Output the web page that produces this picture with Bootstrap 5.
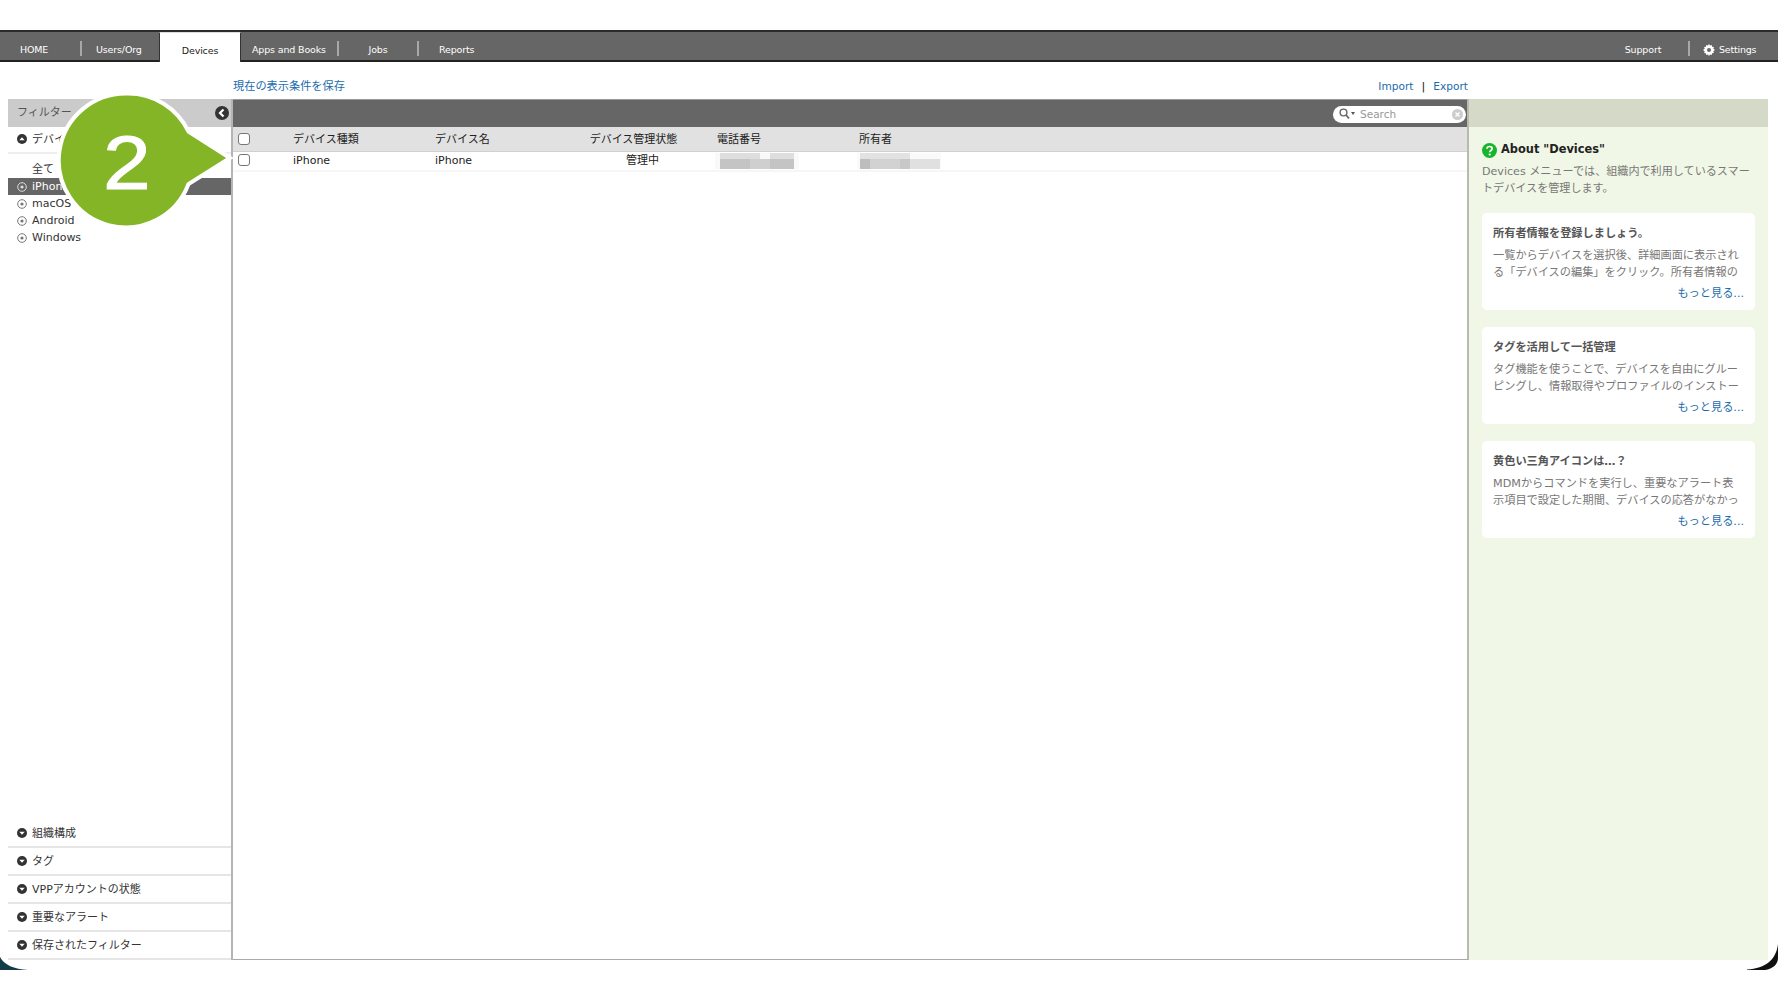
<!DOCTYPE html>
<html lang="ja">
<head>
<meta charset="utf-8">
<title>Devices</title>
<link href="https://cdn.jsdelivr.net/npm/bootstrap@5.3.0/dist/css/bootstrap.min.css" rel="stylesheet">
<style>
html,body{height:1000px;overflow:hidden;background:#fff}
body{font-family:"DejaVu Sans","Noto Sans CJK JP",sans-serif;font-size:11px;color:#333;position:relative}
a{text-decoration:none;color:#1c6bab}
.topnav{margin-top:30px;height:32px;background:#666;border-top:2px solid #2b2b2b;border-bottom:2px solid #222;color:#fff;font-size:9.5px;letter-spacing:-.15px;font-weight:500}
.tabx{height:28px;flex:none;padding-top:8px}
.tabsep{width:2px;height:15px;background:#a8a8a8;flex:none;margin-top:5px}
.tw-home{width:80px;padding-left:20px}
.tw-users{width:77px;padding-left:14px}
.tw-dev{width:82px;background:#fff;color:#222;height:30px;margin-bottom:-2px;border:1px solid #333;border-bottom:0;border-top-color:#ddd;justify-content:center;padding-top:7px}
.tw-apps{width:96px;padding-left:11px}
.tw-jobs{width:78px;justify-content:center}
.tw-rep{width:90px;padding-left:20px}
.tw-sup{width:94px;padding-left:4px}
.tw-set{width:88px;padding-left:13px;padding-right:2px}
.tw-set span{letter-spacing:-.2px}
.subrow{height:37px;padding:13px 310px 0 233px;color:#1c6bab;font-size:11.2px}
.subrow .latinlink{font-size:10.6px}
.pipe{color:#111;margin:0 8px 0 8px}
.panes{height:861px;padding:0 10px 0 8px}
.sidepane{width:225px;flex:none;border-right:2px solid #b4b4b4;position:relative}
.sidehead{height:28px;background:#cbcbcb;color:#555;padding-left:9px;flex:none}
.sidehead svg{margin-right:2px}
.sect{height:28px;padding:2px 0 0 9px;border-bottom:2px solid #e6e6e6;flex:none;color:#333}
.sect svg{margin:0 5px 2px 0;flex:none}
.firstsect{height:27px;border-bottom-color:#eee}
.firstsect svg{margin-bottom:4px}
.typelist{padding-top:7px;flex:1}
.typerow{height:17px;padding:2px 0 0 9px}
.typerow.picked{background:#666;color:#fff}
.typerow svg{margin:0 5px 2px 0;flex:none}
.typerow .noicon{width:10px;margin-right:5px}
.mainpane{width:1236px;flex:none;border-bottom:1px solid #a9a9a9;border-right:2px solid #b9b9ad}
.mainhead{height:28px;background:#666;padding:1px 1px 0 0;border-top:1px solid #999;flex:none}
.searchpill{width:133px;height:17px;background:#fff;border-radius:9px;color:#999;padding:0 3px 0 6px;font-size:10.5px;gap:1px}
.searchpill .searchword{margin-left:3px;padding-top:1px}
.devtable{table-layout:fixed;width:100%;margin:0;border-collapse:collapse}
.devtable th{background:#e1e1e1;height:24px;font-weight:400;border-bottom:1px solid #d0d0d0;padding:2px 0 0;color:#222;vertical-align:middle}
.devtable td{height:20px;padding:1px 0 0;border-bottom:2px solid #f6f6f6;color:#222;vertical-align:middle}
.devtable th.statehead{padding-right:26px}
.devtable td.statecell{padding-right:8px}
.boxc{width:12px;height:12px;border:1px solid #777;border-radius:3px;background:#fff;margin:0 0 2px 5px;display:block;appearance:none}
.c1{width:60px}.c2{width:142px}.c3{width:141px}.c4{width:141px}.c5{width:142px}
.blurcell{display:block;height:16px;width:84px;margin:0 0 0 -2px}
.helppane{flex:1;background:#f1f7e6}
.helphead{height:28px;background:#d5d9c8;flex:none}
.helpbody{padding:14px 13px 0 13px;color:#777}
.helptitle{font-size:11.4px;font-weight:700;color:#222;height:18px;gap:4px}
.helpdesc{line-height:17px;margin:4px 0 16px;font-size:11.1px;white-space:nowrap}
.tipcard{height:97px;background:#fff;border-radius:5px;padding:11px 11px 0;margin-bottom:17px;white-space:nowrap;font-size:11.2px}
.tiptitle{font-weight:700;color:#555;line-height:20px;margin-bottom:3px}
.tiptext{line-height:17px;color:#777}
.tipmore{text-align:right;line-height:17px;margin-top:4px;margin-right:0}
.overbubble{position:absolute;left:55px;top:90px}
.overcorner{position:absolute;left:0;top:940px}
</style>
</head>
<body>
<nav class="topnav d-flex align-items-center">
  <div class="tabx tw-home d-flex align-items-center">HOME</div><div class="tabsep"></div>
  <div class="tabx tw-users d-flex align-items-center">Users/Org</div>
  <div class="tabx tw-dev d-flex align-items-center">Devices</div>
  <div class="tabx tw-apps d-flex align-items-center">Apps and Books</div><div class="tabsep"></div>
  <div class="tabx tw-jobs d-flex align-items-center">Jobs</div><div class="tabsep"></div>
  <div class="tabx tw-rep d-flex align-items-center">Reports</div>
  <div class="flex-grow-1"></div>
  <div class="tabx tw-sup d-flex align-items-center justify-content-center">Support</div><div class="tabsep"></div>
  <div class="tabx tw-set d-flex align-items-center gap-1">
    <svg width="12" height="12" viewBox="0 0 12 12"><path fill="#fff" d="M6 0l1 1.500 1.700-.6.4 1.800 1.800.4-.6 1.700L12 6l-1.700 1.200.6 1.700-1.800.4-.4 1.800-1.700-.6L6 12l-1-1.500-1.700.6-.4-1.800-1.800-.4.6-1.700L0 6l1.700-1.200-.6-1.700 1.800-.4.400-1.800 1.700.6z"/><circle cx="6" cy="6" r="2" fill="#666"/></svg>
    <span>Settings</span>
  </div>
</nav>
<div class="subrow d-flex align-items-center justify-content-between">
  <a href="#">現在の表示条件を保存</a>
  <span><a class="latinlink" href="#">Import</a><span class="pipe">|</span><a class="latinlink" href="#">Export</a></span>
</div>
<div class="panes d-flex">
  <aside class="sidepane d-flex flex-column">
    <div class="sidehead d-flex align-items-center justify-content-between">
      <span>フィルター</span>
      <svg width="14" height="14" viewBox="0 0 14 14"><circle cx="7" cy="7" r="7" fill="#333"/><path d="M8.500 3.500L5 7l3.500 3.500" stroke="#fff" stroke-width="2.200" fill="none"/></svg>
    </div>
    <div class="sect firstsect d-flex align-items-center">
      <svg width="10" height="10" viewBox="0 0 10 10"><circle cx="5" cy="5" r="5" fill="#333"/><path d="M2.300 6.200L5 3.200l2.700 3z" fill="#fff"/></svg>
      <span>デバイスの種類</span>
    </div>
    <div class="typelist">
      <div class="typerow d-flex align-items-center"><span class="noicon"></span>全て</div>
      <div class="typerow picked d-flex align-items-center"><svg width="10" height="10" viewBox="0 0 10 10"><circle cx="5" cy="5" r="4.300" fill="none" stroke="#ddd"/><circle cx="5" cy="5" r="1.600" fill="#ddd"/></svg>iPhone</div>
      <div class="typerow d-flex align-items-center"><svg width="10" height="10" viewBox="0 0 10 10"><circle cx="5" cy="5" r="4.300" fill="none" stroke="#777"/><circle cx="5" cy="5" r="1.600" fill="#777"/></svg>macOS</div>
      <div class="typerow d-flex align-items-center"><svg width="10" height="10" viewBox="0 0 10 10"><circle cx="5" cy="5" r="4.300" fill="none" stroke="#777"/><circle cx="5" cy="5" r="1.600" fill="#777"/></svg>Android</div>
      <div class="typerow d-flex align-items-center"><svg width="10" height="10" viewBox="0 0 10 10"><circle cx="5" cy="5" r="4.300" fill="none" stroke="#777"/><circle cx="5" cy="5" r="1.600" fill="#777"/></svg>Windows</div>
    </div>
    <div class="sect d-flex align-items-center"><svg width="10" height="10" viewBox="0 0 10 10"><circle cx="5" cy="5" r="5" fill="#333"/><path d="M2.300 3.800L5 6.800l2.700-3z" fill="#fff"/></svg><span>組織構成</span></div>
    <div class="sect d-flex align-items-center"><svg width="10" height="10" viewBox="0 0 10 10"><circle cx="5" cy="5" r="5" fill="#333"/><path d="M2.300 3.800L5 6.800l2.700-3z" fill="#fff"/></svg><span>タグ</span></div>
    <div class="sect d-flex align-items-center"><svg width="10" height="10" viewBox="0 0 10 10"><circle cx="5" cy="5" r="5" fill="#333"/><path d="M2.300 3.800L5 6.800l2.700-3z" fill="#fff"/></svg><span>VPPアカウントの状態</span></div>
    <div class="sect d-flex align-items-center"><svg width="10" height="10" viewBox="0 0 10 10"><circle cx="5" cy="5" r="5" fill="#333"/><path d="M2.300 3.800L5 6.800l2.700-3z" fill="#fff"/></svg><span>重要なアラート</span></div>
    <div class="sect d-flex align-items-center"><svg width="10" height="10" viewBox="0 0 10 10"><circle cx="5" cy="5" r="5" fill="#333"/><path d="M2.300 3.800L5 6.800l2.700-3z" fill="#fff"/></svg><span>保存されたフィルター</span></div>
  </aside>
  <main class="mainpane d-flex flex-column">
    <div class="mainhead d-flex align-items-center justify-content-end">
      <div class="searchpill d-flex align-items-center">
        <svg width="17" height="12" viewBox="0 0 17 12"><circle cx="4.500" cy="4.500" r="3.400" fill="none" stroke="#666" stroke-width="1.400"/><path d="M7 7l3 3.500" stroke="#666" stroke-width="1.800"/><path d="M12 4h4l-2 3z" fill="#555"/></svg>
        <span class="flex-grow-1 searchword">Search</span>
        <svg width="11" height="11" viewBox="0 0 11 11"><circle cx="5.500" cy="5.500" r="5.500" fill="#ccc"/><path d="M3.500 3.500l4 4m0-4l-4 4" stroke="#fff" stroke-width="1.300"/></svg>
      </div>
    </div>
    <table class="devtable">
      <thead>
        <tr><th class="c1"><input class="boxc" type="checkbox" aria-label="全て選択"></th><th class="c2">デバイス種類</th><th class="c3">デバイス名</th><th class="c4 statehead text-center">デバイス管理状態</th><th class="c5">電話番号</th><th>所有者</th></tr>
      </thead>
      <tbody>
        <tr><td><input class="boxc" type="checkbox" aria-label="選択"></td><td>iPhone</td><td>iPhone</td><td class="statecell text-center">管理中</td>
          <td><svg class="blurcell" viewBox="0 0 84 16"><rect width="84" height="16" fill="#f9f9f9"/><g fill="#dedede"><rect x="5" y="0" width="40" height="6"/><rect x="55" y="0" width="24" height="6"/></g><g fill="#c4c4c4"><rect x="5" y="6" width="30" height="10"/><rect x="55" y="6" width="24" height="10"/><rect x="35" y="6" width="20" height="10" fill="#cfcfcf"/></g></svg></td>
          <td><svg class="blurcell" viewBox="0 0 84 16"><rect width="84" height="16" fill="#fafafa"/><g fill="#e2e2e2"><rect x="3" y="0" width="50" height="6"/></g><g fill="#d2d2d2"><rect x="13" y="6" width="30" height="10"/></g><rect x="3" y="6" width="10" height="10" fill="#bdbdbd"/><rect x="43" y="6" width="10" height="10" fill="#c8c8c8"/><rect x="53" y="6" width="30" height="10" fill="#e0e0e0"/></svg></td></tr>
      </tbody>
    </table>
  </main>
  <section class="helppane d-flex flex-column">
    <div class="helphead"></div>
    <div class="helpbody">
      <div class="helptitle d-flex align-items-center">
        <svg width="15" height="15" viewBox="0 0 15 15"><circle cx="7.500" cy="7.500" r="7.500" fill="#17b52c"/><path d="M5 5.800C5 2.800 10.200 2.800 10.200 5.600c0 2-2.500 1.900-2.500 3.700" stroke="#fff" stroke-width="1.700" fill="none"/><circle cx="7.700" cy="11.500" r="1.100" fill="#fff"/></svg>
        <span>About "Devices"</span>
      </div>
      <p class="helpdesc">Devices メニューでは、組織内で利用しているスマー<br>トデバイスを管理します。</p>
      <div class="tipcard">
        <div class="tiptitle">所有者情報を登録しましょう。</div>
        <div class="tiptext">一覧からデバイスを選択後、詳細画面に表示され<br>る「デバイスの編集」をクリック。所有者情報の</div>
        <div class="tipmore"><a href="#">もっと見る...</a></div>
      </div>
      <div class="tipcard">
        <div class="tiptitle">タグを活用して一括管理</div>
        <div class="tiptext">タグ機能を使うことで、デバイスを自由にグルー<br>ピングし、情報取得やプロファイルのインストー</div>
        <div class="tipmore"><a href="#">もっと見る...</a></div>
      </div>
      <div class="tipcard">
        <div class="tiptitle">黄色い三角アイコンは…？</div>
        <div class="tiptext">MDMからコマンドを実行し、重要なアラート表<br>示項目で設定した期間、デバイスの応答がなかっ</div>
        <div class="tipmore"><a href="#">もっと見る...</a></div>
      </div>
    </div>
  </section>
</div>
<svg class="overbubble" width="185" height="145" viewBox="0 0 185 145">
  <path d="M73 3.500a67 67 0 0 1 60.500 38L175 68l-41.500 26A67 67 0 1 1 73 3.500z" fill="#84b527" stroke="#fff" stroke-width="4"/>
  <text transform="translate(72 99) scale(1.13 1)" text-anchor="middle" font-family="Liberation Sans, sans-serif" font-size="76" fill="#fff" stroke="#fff" stroke-width="1">2</text>
</svg>
<svg class="overcorner" width="1778" height="40" viewBox="0 0 1778 40">
  <path d="M0 17C4 25 14 29 28 30H0z" fill="#123c48"/>
  <path d="M1778 4C1776 20 1766 28 1747 29.500L1747 30h18c8-1 13-6 13-12z" fill="#111"/>
</svg>
</body>
</html>
